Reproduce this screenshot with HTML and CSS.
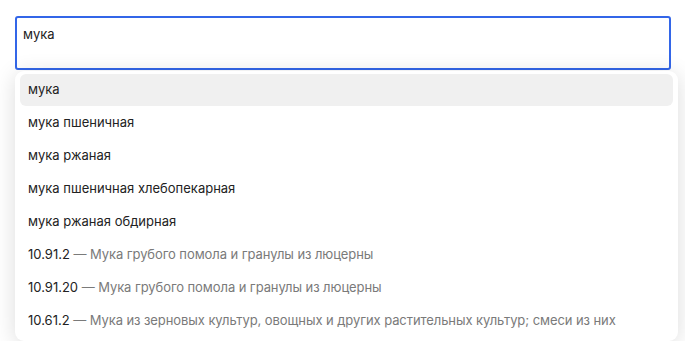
FILE: index.html
```html
<!DOCTYPE html>
<html lang="ru">
<head>
    <meta charset="utf-8" />
    <title>Поиск</title>
    <link rel="stylesheet" href="styles.css">
</head>
<body>
<div class="search">
    <div class="search-field">мука</div>

    <ul class="suggest">
        <li class="suggest-item active">мука</li>
        <li class="suggest-item">мука пшеничная</li>
        <li class="suggest-item">мука ржаная</li>
        <li class="suggest-item">мука пшеничная хлебопекарная</li>
        <li class="suggest-item">мука ржаная обдирная</li>
        <li class="suggest-item"><span class="code">10.91.2</span> <span class="desc">— Мука грубого помола и гранулы из люцерны</span></li>
        <li class="suggest-item"><span class="code">10.91.20</span> <span class="desc">— Мука грубого помола и гранулы из люцерны</span></li>
        <li class="suggest-item"><span class="code">10.61.2</span> <span class="desc">— Мука из зерновых культур, овощных и других растительных культур; смеси из них</span></li>
    </ul>
</div>
</body>
</html>
```

FILE: styles.css
```css
body {
    margin: 0;
    background: #fff;
    font-family: Inter, "Noto Sans", sans-serif;
    font-size: 13px;
    color: #222;
}
.search {
    padding: 16px 0 0 15px;
    width: 663px;
}
/* input box with blue focus border */
.search-field {
    width: 656px;
    height: 54px;
    box-sizing: border-box;
    border: 2px solid #3366e8;
    border-radius: 3px;
    padding: 7px 6px;
    line-height: 18px;
}
/* dropdown with suggestions, its shadow falls over the input */
.suggest {
    position: relative;
    list-style: none;
    margin: 1px 0 0;
    padding: 3px 5px;
    background: #fff;
    border-radius: 9px;
    box-shadow: 0 3px 22px rgba(0, 0, 0, 0.14);
}
.suggest-item {
    height: 33px;
    line-height: 30px;
    padding: 0 8px;
    border-radius: 6px;
    white-space: nowrap;
}
.suggest-item.active {
    background: #f0f0f0;
    height: 32px;
    margin-bottom: 1px;
}
.code {
    color: #222;
}
.desc {
    color: #7a7a7a;
    letter-spacing: -0.08px;
}
```
